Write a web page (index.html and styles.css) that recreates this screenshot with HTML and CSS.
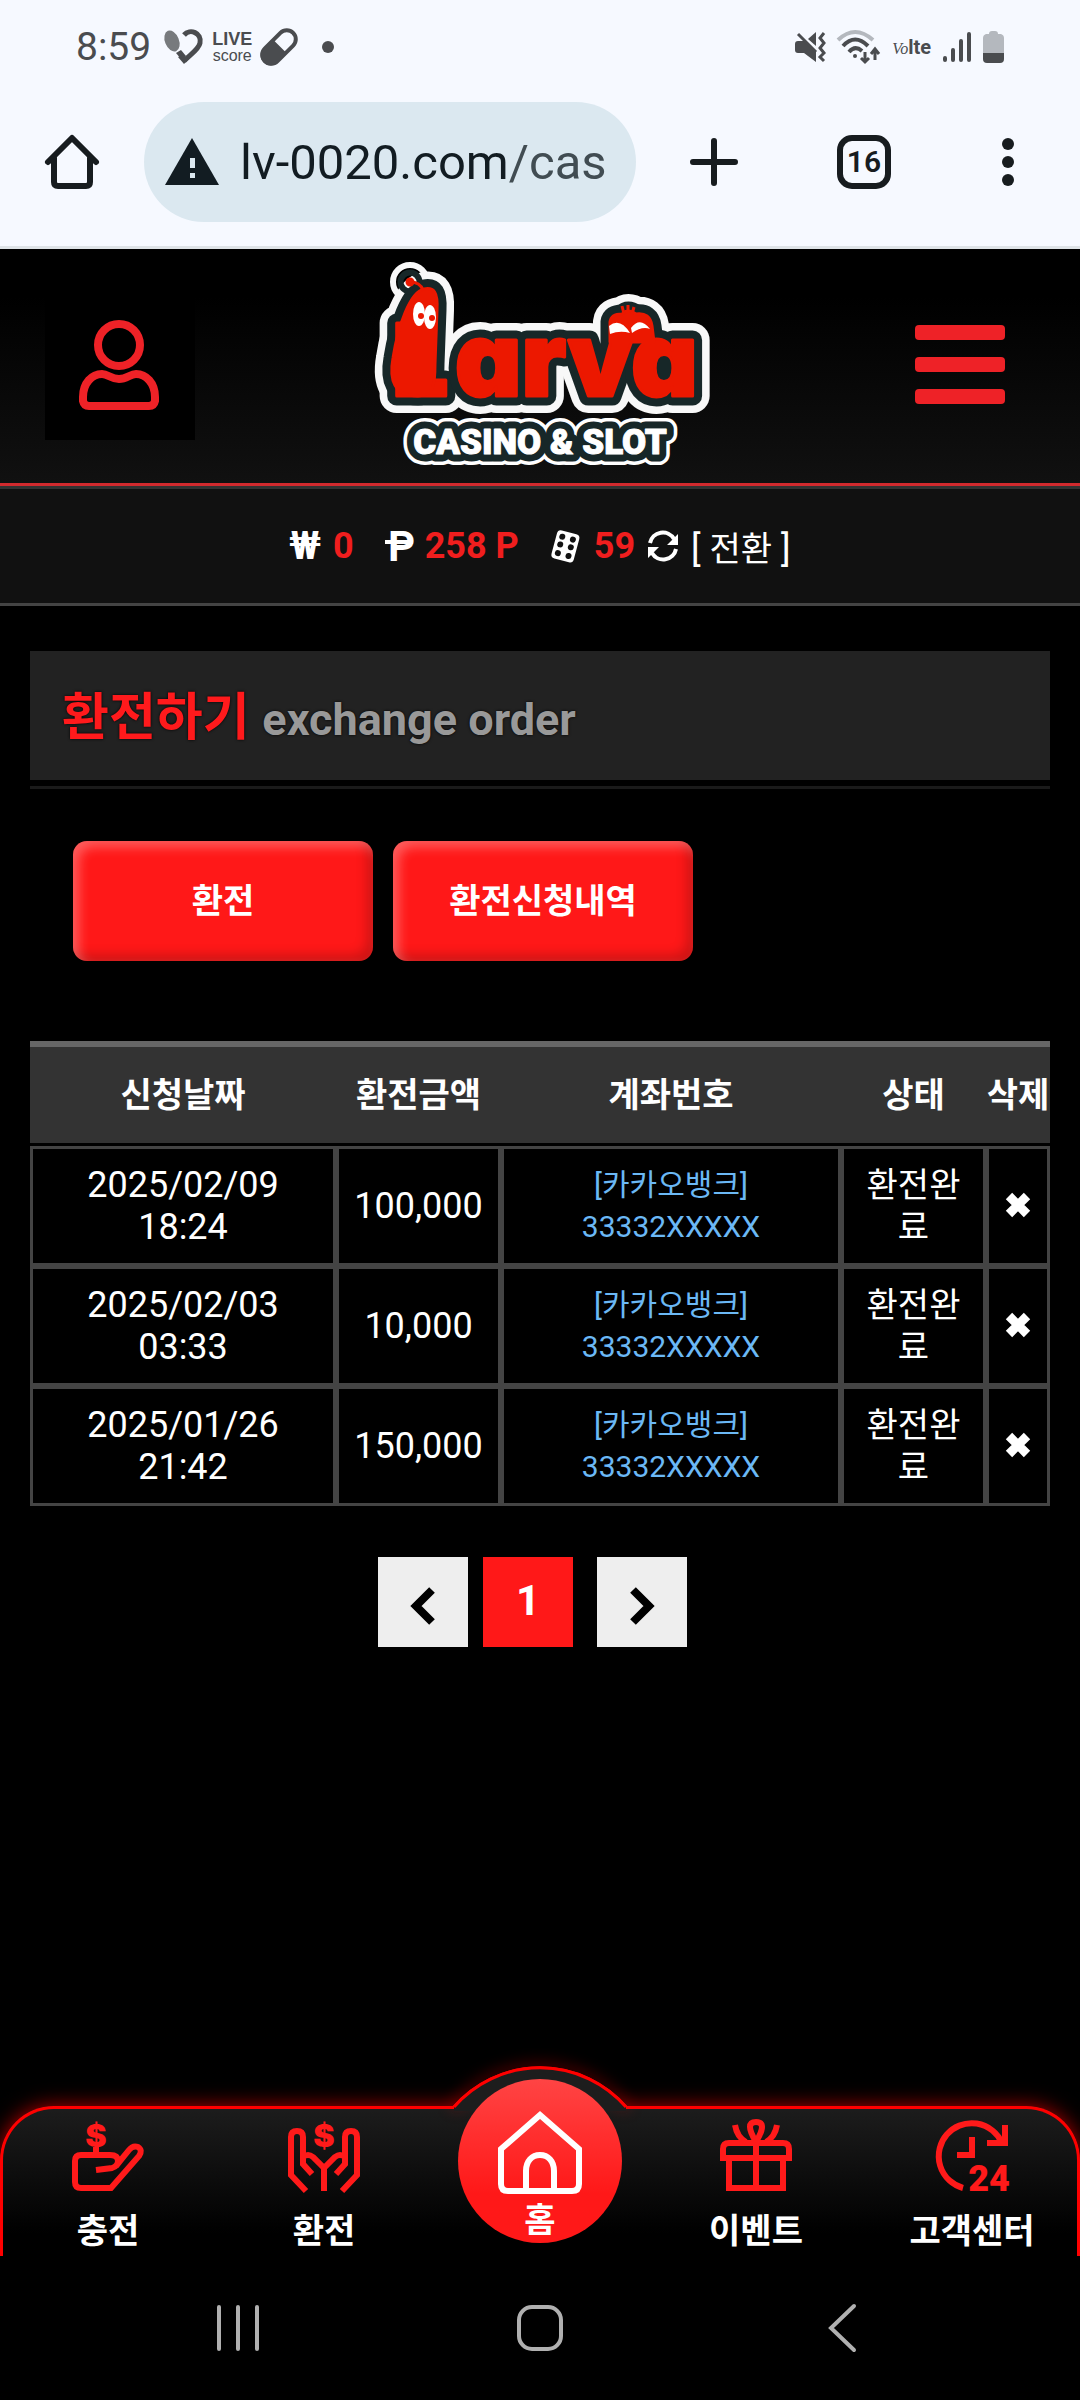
FILE: index.html
```html
<!DOCTYPE html>
<html lang="ko">
<head>
    <meta charset="UTF-8">
    <meta name="viewport" content="width=device-width, initial-scale=1.0">
    <title>환전하기</title>
    <link rel="stylesheet" href="styles.css">
</head>
<body>
<div class="status-bar">
    <div class="status-left">
        <span class="clock">8:59</span>
        <svg width="39" height="36" viewBox="0 0 39 36">
            <ellipse cx="8" cy="12" rx="7" ry="11" transform="rotate(-22 8 12)" fill="#777a7d"/>
            <path d="M12 24 L17 21 L22 27 L17 30 Z" fill="#4a4c4f"/>
            <path d="M20 6 C26 -1 38 4 36 14 C35 20 27 25 20 32" fill="none" stroke="#4a4c4f" stroke-width="5"/>
            <path d="M14 28 L20 35 L25 30 L19 26 Z" fill="#4a4c4f"/>
        </svg>
        <span class="live-score"><b>LIVE</b><span>score</span></span>
        <svg width="36" height="36" viewBox="0 0 36 36">
            <g transform="rotate(45 18 18)">
                <rect x="9" y="-2" width="18" height="40" rx="9" fill="none" stroke="#4a4c4f" stroke-width="4"/>
                <path d="M8 17 H28 V30 A10 10 0 0 1 8 30 Z" fill="#4a4c4f"/>
            </g>
        </svg>
        <span class="dot"></span>
    </div>
    <div class="status-right">
        <svg width="30" height="30" viewBox="0 0 30 30" fill="#4a4c4f">
            <path d="M0 12 Q0 9 3 9 H9 L21 20 V30 L9 21 H3 Q0 21 0 18 Z"/>
            <path d="M13 7 L21 0 V14 Z"/>
            <path d="M3 2 L21 20" stroke="#4a4c4f" stroke-width="3"/>
            <path d="M29 1 L25 6 L29 11 L25 16 L29 21 L25 25 L29 29" fill="none" stroke="#4a4c4f" stroke-width="3"/>
        </svg>
        <svg class="wifi" width="43" height="34" viewBox="0 0 43 34" fill="none" stroke-width="4">
            <path d="M1 10 Q18 -6 36 10" stroke="#b4b8be"/>
            <path d="M6 16 Q18 3 31 16 M12 22 Q18 15 25 21" stroke="#4a4c4f"/>
            <circle cx="18" cy="26" r="2" fill="#4a4c4f" stroke="none"/>
            <path d="M28 22 V32 M24 28 L28 32 L32 28 M38 30 V20 M34 24 L38 19 L42 24" stroke="#4a4c4f" stroke-width="3"/>
        </svg>
        <span class="volte"><i>Vo</i><b>lte</b></span>
        <svg width="28" height="30" viewBox="0 0 28 30" stroke="#4a4c4f" stroke-width="4" stroke-linecap="round">
            <path d="M2 26 V28 M10 18 V28 M18 9 V28 M26 2 V28"/>
        </svg>
        <svg width="21" height="32" viewBox="0 0 21 32">
            <path d="M6 3 Q6 0 9 0 H12 Q15 0 15 3 H18 Q21 4 21 7 V22 H0 V7 Q0 4 3 3 Z" fill="#b4b8be"/>
            <path d="M0 22 H21 V28 Q21 32 17 32 H4 Q0 32 0 28 Z" fill="#4a4c4f"/>
        </svg>
    </div>
</div>

<div class="toolbar">
    <button class="tool" aria-label="Home">
        <svg width="54" height="54" viewBox="0 0 54 54" fill="none" stroke="#171c1f" stroke-width="6" stroke-linejoin="round" stroke-linecap="round">
            <path d="M3 27 L27 3 L51 27 M9 23 V47 Q9 51 13 51 H41 Q45 51 45 47 V23"/>
        </svg>
    </button>
    <button class="omnibox">
        <svg width="54" height="48" viewBox="0 0 54 48">
            <path d="M27 0 L54 47 H0 Z" fill="#121c22"/>
            <path d="M25 20 H30 V30 H25 Z M25 35 H30 V40 H25 Z" fill="#dbe8f0"/>
        </svg>
        <span class="url">lv-0020.com<span class="path">/cas</span></span>
    </button>
    <button class="tool new-tab" aria-label="New tab">
        <svg width="48" height="48" viewBox="0 0 48 48" stroke="#171c1f" stroke-width="6" stroke-linecap="round">
            <path d="M3 24 H45 M24 3 V45"/>
        </svg>
    </button>
    <button class="tool"><span class="tab-count">16</span></button>
    <button class="tool" aria-label="Menu">
        <svg width="12" height="48" viewBox="0 0 12 48" fill="#171c1f">
            <circle cx="6" cy="6" r="6"/><circle cx="6" cy="24" r="6"/><circle cx="6" cy="42" r="6"/>
        </svg>
    </button>
</div>

<header class="header">
    <a href="#" class="user" aria-label="My page">
        <svg width="80" height="92" viewBox="0 0 80 92" fill="none" stroke="#ee2227" stroke-width="8">
            <circle cx="40" cy="26" r="21"/>
            <path d="M4 78 C4 64 13 55 23 55 C29 55 32 60 40 60 C48 60 51 55 57 55 C67 55 76 64 76 78 V82 Q75 87 70 87 H10 Q5 87 4 82 Z"/>
        </svg>
    </a>
    <a href="#" class="logo" aria-label="Larva Casino &amp; Slot">
        <svg width="332" height="210" viewBox="0 0 332 210">
            <defs>
                <g id="word" stroke-linejoin="round">
                    <text class="logo-l" x="18" y="136">L</text>
                    <text class="logo-arva" x="81" y="136">arva</text>
                    <!-- tall larva -->
                    <path d="M44 136 C20 136 15 120 19 98 C24 66 36 32 50 29 C60 27 64 32 63 50 L61 104 C61 124 60 136 44 136 Z"/>
                    <circle cx="36" cy="22" r="3"/>
                    <!-- small larva -->
                    <path d="M236 82 V62 Q237 54 248 54 Q254 48 262 54 Q276 52 278 66 L280 82 Z"/>
                </g>
            </defs>
            <use href="#word" fill="#f8f8f8" stroke="#f8f8f8" stroke-width="34"/>
            <use href="#word" fill="#172728" stroke="#172728" stroke-width="19"/>
            <use href="#word" fill="#ec1800" stroke="#ec1800" stroke-width="3"/>
            <path d="M36 22 Q46 22 49 30 M250 54 L248 46 M254 54 V45 M258 54 L260 47" fill="none" stroke="#ec1800" stroke-width="3"/>
            <ellipse cx="45" cy="54" rx="6" ry="12" fill="#fff"/>
            <ellipse cx="56" cy="57" rx="6" ry="12" fill="#fff"/>
            <circle cx="47" cy="56" r="3" fill="#ec1800"/>
            <circle cx="58" cy="58" r="3" fill="#ec1800"/>
            <path d="M235 66 Q246 57 256 73 Q246 70 236 74 Z M257 68 Q266 56 276 69 Q268 66 258 73 Z" fill="#fff"/>
            <g class="logo-sub" text-anchor="middle" stroke-linejoin="round">
                <text x="166" y="194" fill="#fff" stroke="#fff" stroke-width="22">CASINO &amp; SLOT</text>
                <text x="166" y="194" fill="#172728" stroke="#172728" stroke-width="15">CASINO &amp; SLOT</text>
                <text x="166" y="194" fill="#fff" stroke="#fff" stroke-width="1">CASINO &amp; SLOT</text>
            </g>
        </svg>
    </a>
    <button class="menu" aria-label="메뉴"><span></span><span></span><span></span></button>
</header>

<div class="balance">
    <div class="amount"><span class="won">₩</span><b>0</b></div>
    <div class="amount">
        <svg width="28" height="32" viewBox="0 0 28 32" fill="#fff">
            <text class="peso" x="3" y="31">P</text>
            <path d="M0 10 H28 V14 H0 Z"/>
        </svg>
        <b>258 P</b>
    </div>
    <div class="amount">
        <svg width="32" height="33" viewBox="0 0 32 33">
            <g transform="rotate(15 16 16)">
                <rect x="4" y="2" width="23" height="29" rx="4" fill="#fff"/>
                <g fill="#111">
                    <circle cx="10" cy="8" r="3"/><circle cx="21" cy="8" r="3"/>
                    <circle cx="10" cy="16" r="3"/><circle cx="21" cy="16" r="3"/>
                    <circle cx="10" cy="25" r="3"/><circle cx="21" cy="25" r="3"/>
                </g>
            </g>
        </svg>
        <b>59</b>
        <svg width="32" height="32" viewBox="0 0 32 32">
            <path d="M3 13 A13 13 0 0 1 27 9 M29 19 A13 13 0 0 1 5 23" fill="none" stroke="#fff" stroke-width="4"/>
            <path d="M31 4 V15 H20 Z M1 28 V17 H12 Z" fill="#fff"/>
        </svg>
        <a href="#" class="switch">[ <span>전환</span> ]</a>
    </div>
</div>

<main class="content">
    <div class="title-wrap">
        <h1 class="title">환전하기 <small>exchange order</small></h1>
    </div>

    <div class="tabs">
        <button>환전</button>
        <button>환전신청내역</button>
    </div>

    <table class="history">
        <colgroup>
            <col class="col-date"><col class="col-amount"><col class="col-account"><col class="col-state"><col class="col-delete">
        </colgroup>
        <thead>
        <tr>
            <th>신청날짜</th>
            <th>환전금액</th>
            <th>계좌번호</th>
            <th>상태</th>
            <th>삭제</th>
        </tr>
        </thead>
        <tbody>
        <tr>
            <td>2025/02/09 18:24</td>
            <td>100,000</td>
            <td class="account">[카카오뱅크]<br>33332XXXXX</td>
            <td class="state">환전완료</td>
            <td><button class="delete" aria-label="삭제"><svg width="26" height="26" viewBox="0 0 26 26"><path d="M4 4 L22 22 M22 4 L4 22"/></svg></button></td>
        </tr>
        <tr>
            <td>2025/02/03 03:33</td>
            <td>10,000</td>
            <td class="account">[카카오뱅크]<br>33332XXXXX</td>
            <td class="state">환전완료</td>
            <td><button class="delete" aria-label="삭제"><svg width="26" height="26" viewBox="0 0 26 26"><path d="M4 4 L22 22 M22 4 L4 22"/></svg></button></td>
        </tr>
        <tr>
            <td>2025/01/26 21:42</td>
            <td>150,000</td>
            <td class="account">[카카오뱅크]<br>33332XXXXX</td>
            <td class="state">환전완료</td>
            <td><button class="delete" aria-label="삭제"><svg width="26" height="26" viewBox="0 0 26 26"><path d="M4 4 L22 22 M22 4 L4 22"/></svg></button></td>
        </tr>
        </tbody>
    </table>

    <div class="pager">
        <button aria-label="이전">
            <svg width="26" height="40" viewBox="0 0 26 40"><path d="M22 4 L6 20 L22 36"/></svg>
        </button>
        <button class="current">1</button>
        <button class="next" aria-label="다음">
            <svg width="26" height="40" viewBox="0 0 26 40"><path d="M4 4 L20 20 L4 36"/></svg>
        </button>
    </div>
</main>

<nav class="bottom-nav">
    <svg class="hump" width="200" height="60" viewBox="0 0 200 60">
        <path class="hump-glow" d="M14 44 A114 114 0 0 1 186 44"/>
        <path d="M14 44 A114 114 0 0 1 186 44 V48 H14 Z" fill="#1d1d1d"/>
        <path class="hump-line" d="M14 44 A114 114 0 0 1 186 44"/>
    </svg>
    <a href="#">
        <svg width="72" height="72" viewBox="0 0 72 72">
            <text class="dollar" x="24" y="28">$</text>
            <path d="M24 28 V36"/>
            <path d="M24 51 L40 49 Q46 47 46 42 Q46 36 38 36 H9 Q3 36 3 42 V63 Q3 69 9 69 H39 L67 37 Q71 31 66 28 Q61 26 57 31 L44 47"/>
        </svg>
        <span>충전</span>
    </a>
    <a href="#">
        <svg width="72" height="72" viewBox="0 0 72 72">
            <text class="dollar" x="36" y="28">$</text>
            <path d="M18 72 L3 56 V18 Q3 12 9 12 Q15 12 15 18 V45 L24 55 M15 38 Q20 34 25 38 L36 49 V72"/>
            <path d="M54 72 L69 56 V18 Q69 12 63 12 Q57 12 57 18 V45 L48 55 M57 38 Q52 34 47 38 L36 49"/>
        </svg>
        <span>환전</span>
    </a>
    <a href="#" class="home">
        <svg width="84" height="84" viewBox="0 0 84 84">
            <path d="M3 38 L42 4 L81 38 V73 Q81 80 74 80 H10 Q3 80 3 73 Z M28 80 V60 C28 50 34 44 42 44 C50 44 56 50 56 60 V80"/>
        </svg>
        <span>홈</span>
    </a>
    <a href="#">
        <svg width="72" height="72" viewBox="0 0 72 72">
            <path d="M3 39 V30 Q3 24 9 24 H63 Q69 24 69 30 V39 Z M9 39 V69 H63 V39 M36 24 V69"/>
            <path d="M36 23 Q24 3 36 3 Q48 3 36 23 M15 6 Q17 18 26 23 M57 6 Q55 18 46 23"/>
        </svg>
        <span>이벤트</span>
    </a>
    <a href="#">
        <svg width="72" height="72" viewBox="0 0 72 72">
            <path d="M27 69 A33 33 0 1 1 66 24 M69 6 V24 H51 M36 18 V36 H21"/>
            <text class="hours" x="53" y="72">24</text>
        </svg>
        <span>고객센터</span>
    </a>
</nav>

<div class="system-nav">
    <button aria-label="Recents">
        <svg width="48" height="48" viewBox="0 0 48 48"><path d="M5 3 V45 M24 3 V45 M43 3 V45"/></svg>
    </button>
    <button aria-label="Home">
        <svg width="48" height="48" viewBox="0 0 48 48"><rect x="3" y="3" width="42" height="42" rx="13"/></svg>
    </button>
    <button aria-label="Back">
        <svg width="48" height="48" viewBox="0 0 48 48"><path d="M36 2 L13 24 L36 46"/></svg>
    </button>
</div>
</body>
</html>
```
FILE: styles.css
```css
* {
    box-sizing: border-box;
}
body {
    margin: 0;
    min-height: 100vh;
    display: flex;
    flex-direction: column;
    background-color: #000;
    color: #fff;
    font-family: Roboto, "Noto Sans CJK KR", sans-serif;
    font-size: 36px;
}
a {
    color: inherit;
    text-decoration: none;
}
button {
    padding: 0;
    border: none;
    background: none;
    color: inherit;
    font-family: inherit;
}
svg {
    display: block;
    flex: none;
    overflow: visible;
}

/* phone status bar */
.status-bar {
    display: flex;
    justify-content: space-between;
    height: 90px;
    padding: 4px 76px 0;
    background-color: #f6f9ff;
    color: #4a4c4f;
}
.status-left,
.status-right {
    display: flex;
    align-items: center;
    gap: 9px;
}
.status-right {
    gap: 12px;
}
.clock {
    margin-right: 4px;
    font-size: 39px;
}
.live-score {
    display: flex;
    flex-direction: column;
    align-items: center;
    width: 40px;
    font-family: "Liberation Sans", sans-serif;
    font-size: 16px;
    line-height: 16px;
}
.live-score b {
    font-size: 18px;
    line-height: 18px;
}
.dot {
    width: 12px;
    height: 12px;
    margin-left: 16px;
    border-radius: 50%;
    background-color: #4a4c4f;
}
.volte {
    font-size: 20px;
}
.volte i {
    font-family: "Liberation Serif", serif;
    font-size: 16px;
}

/* browser toolbar */
.toolbar {
    display: flex;
    padding: 12px 0 24px;
    border-bottom: 3px solid #dee3e7;
    background-color: #f6f9ff;
    color: #171c1f;
}
.tool {
    display: flex;
    align-items: center;
    justify-content: center;
    width: 144px;
}
.new-tab {
    width: 156px;
}
.omnibox {
    display: flex;
    flex: 1;
    align-items: center;
    gap: 21px;
    height: 120px;
    padding-left: 21px;
    border-radius: 60px;
    background-color: #dbe8f0;
}
.url {
    font-size: 49px;
    color: #121c22;
}
.path {
    color: #414c52;
}
.tab-count {
    width: 54px;
    height: 54px;
    border: 6px solid #171c1f;
    border-radius: 15px;
    font-size: 30px;
    font-weight: 600;
    line-height: 42px;
}

/* site header */
.header {
    display: flex;
    align-items: center;
    justify-content: space-between;
    height: 240px;
    padding: 0 45px 6px;
    border-bottom: 3px solid #333;
    background: linear-gradient(#000 20%, #111);
    box-shadow: inset 0 -3px #d22a2e;
}
.user {
    display: flex;
    align-items: center;
    justify-content: center;
    width: 150px;
    height: 150px;
    padding-right: 2px;
    background-color: #000;
}
.logo-l,
.logo-arva {
    font-family: Inter, sans-serif;
    font-weight: 900;
    font-feature-settings: "cv11";
}
.logo-l {
    font-size: 100px;
}
.logo-arva {
    font-size: 103px;
}
.logo-sub {
    font-family: Roboto, sans-serif;
    font-size: 35px;
    font-weight: 900;
}
.menu {
    display: flex;
    flex-direction: column;
    gap: 17px;
    width: 150px;
    padding: 0 30px;
}
.menu span {
    height: 15px;
    border-radius: 4px;
    background-color: #ee2227;
}

.balance {
    display: flex;
    align-items: center;
    justify-content: center;
    gap: 31px;
    height: 117px;
    border-bottom: 3px solid #444;
    background-color: #111;
}
.amount {
    display: flex;
    align-items: center;
    gap: 12px;
}
.amount b {
    color: #f01e1e;
}
.won {
    font-size: 39px;
    font-weight: 700;
}
.peso {
    font-size: 42px;
    font-weight: 700;
}
.switch span {
    font-size: 34px;
}

/* page content */
.content {
    flex: 1;
    padding: 45px 30px;
}
.title-wrap {
    padding-bottom: 6px;
    border-bottom: 3px solid #1a1a1a;
}
.title {
    height: 129px;
    margin: 0;
    padding: 2px 32px 0;
    background-color: #222;
    color: #ff1a1c;
    font-size: 51px;
    line-height: 129px;
    text-shadow: 0 0 3px #000;
}
.title small {
    color: #999;
    font-size: 45px;
}
.tabs {
    display: flex;
    gap: 20px;
    margin: 52px 43px 80px;
}
.tabs button {
    width: 300px;
    height: 120px;
    padding-bottom: 6px;
    border-radius: 14px;
    background-color: #ff1818;
    box-shadow: inset 6px 6px 12px rgba(255, 255, 255, 0.3), inset -6px -6px 12px rgba(0, 0, 0, 0.2);
    font-size: 34px;
    font-weight: 700;
}
.history {
    width: 100%;
    table-layout: fixed;
    border-spacing: 0;
    text-align: center;
    line-height: 42px;
}
.col-date {
    width: 306px;
}
.col-amount {
    width: 165px;
}
.col-state {
    width: 145px;
}
.col-delete {
    width: 64px;
}
.history th {
    height: 105px;
    padding: 0;
    border-top: 6px solid #666;
    border-bottom: 3px solid #000;
    background-color: #333;
    font-size: 34px;
    white-space: nowrap;
}
.history td {
    height: 120px;
    padding: 0 10px;
    border: 3px solid #444;
}
.history td:first-child {
    padding: 0 50px;
}
.history td:last-child {
    padding: 0;
}
.history .account {
    color: #6bb8f5;
    font-size: 30px;
}
.history .state {
    padding: 0 20px;
    font-size: 34px;
    word-break: break-all;
}
.delete svg {
    stroke: #fff;
    stroke-width: 9;
}
.pager {
    display: flex;
    justify-content: center;
    gap: 15px;
    margin: 51px 15px 0 0;
}
.pager button {
    display: flex;
    align-items: center;
    justify-content: center;
    width: 90px;
    height: 90px;
    padding-top: 8px;
    background-color: #eee;
}
.pager .current {
    padding: 0 0 4px;
    background-color: #ff1818;
    font-size: 42px;
    font-weight: 700;
}
.pager .next {
    margin-left: 9px;
}
.pager svg {
    fill: none;
    stroke: #000;
    stroke-width: 8;
}

/* bottom navigation */
.bottom-nav {
    position: relative;
    display: flex;
    height: 150px;
    border-radius: 54px 54px 0 0;
    background: linear-gradient(#1d1d1d, #000 85%);
    box-shadow: 0 0 20px rgba(255, 0, 0, 0.7);
}
.bottom-nav::before {
    content: "";
    position: absolute;
    inset: 0;
    border: 3px solid #f00;
    border-bottom: none;
    border-radius: 54px 54px 0 0;
}
.hump {
    position: absolute;
    top: -43px;
    left: calc(50% - 100px);
}
.hump-glow,
.hump-line {
    fill: none;
    stroke: #f00;
    stroke-width: 3;
}
.hump-glow {
    filter: drop-shadow(0 0 8px #f00);
}
.bottom-nav a {
    position: relative;
    display: flex;
    flex: 1;
    flex-direction: column;
    align-items: center;
    gap: 14px;
    padding-top: 13px;
    font-size: 34px;
    font-weight: 700;
    line-height: 52px;
    white-space: nowrap;
}
.bottom-nav a svg {
    fill: none;
    stroke: #ff1a1a;
    stroke-width: 6;
}
.bottom-nav text {
    fill: #ff1a1a;
    stroke: none;
    font-size: 36px;
    font-weight: 900;
    text-anchor: middle;
}
.bottom-nav .dollar {
    font-family: Inter, sans-serif;
    font-size: 32px;
}
.bottom-nav .home {
    flex: none;
    width: 164px;
    height: 164px;
    margin: -27px 26px 0;
    padding-top: 32px;
    gap: 0;
    border-radius: 50%;
    background: linear-gradient(#ff4444, #ff1818 70%);
    line-height: 50px;
}
.bottom-nav .home svg {
    stroke: #fff;
}

.system-nav {
    position: relative;
    display: flex;
    justify-content: center;
    gap: 254px;
    height: 144px;
    background-color: #000;
}
.system-nav svg {
    fill: none;
    stroke: #b0b0b0;
    stroke-width: 4;
    stroke-linecap: round;
}
```
